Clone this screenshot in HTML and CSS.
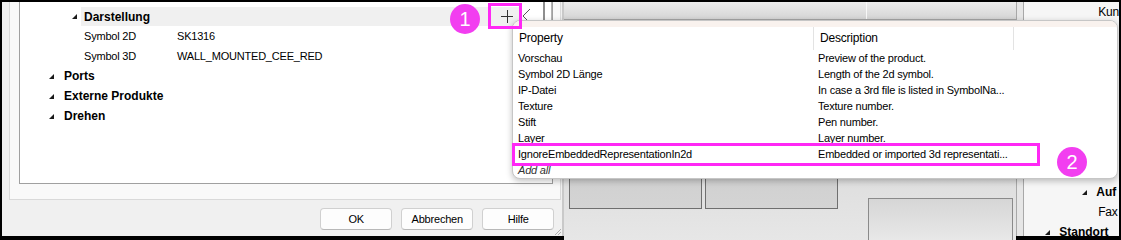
FILE: index.html
```html
<!DOCTYPE html>
<html lang="de">
<head>
<meta charset="UTF-8">
<title>Eigenschaften</title>
<link rel="stylesheet" href="styles.css">
</head>
<body>
<div class="screen">

  <!-- Dialog links -->
  <div class="dialog">
    <div class="tabpage">
      <div class="grid">
        <div class="row cat-row level1">
          <span class="tri"></span>
          <span class="band"><b>Darstellung</b></span>
        </div>
        <div class="row prop"><span class="name">Symbol 2D</span><span>SK1316</span></div>
        <div class="row prop"><span class="name">Symbol 3D</span><span>WALL_MOUNTED_CEE_RED</span></div>
        <div class="row cat-row level0"><span class="tri"></span><b>Ports</b></div>
        <div class="row cat-row level0"><span class="tri"></span><b>Externe Produkte</b></div>
        <div class="row cat-row level0"><span class="tri"></span><b>Drehen</b></div>

        <div class="grid-tools">
          <svg width="44" height="16" viewBox="0 0 44 16">
            <path d="M9 8.5h12M15.5 2v13" stroke="#333" stroke-width="1" fill="none"/>
            <path d="M38 1l-7 7 7 7" stroke="#555" stroke-width="1" fill="none"/>
          </svg>
        </div>
        <span class="edge-line edge-a"></span>
        <span class="edge-line edge-b"></span>
      </div>
    </div>
    <div class="buttons">
      <button>OK</button>
      <button>Abbrechen</button>
      <button>Hilfe</button>
    </div>
    <svg class="grip" width="8" height="8" viewBox="0 0 8 8">
      <path d="M7 1L1 7M7 4L4 7" stroke="#b0b0b0" stroke-width="1"/>
    </svg>
  </div>

  <!-- Anwendung im Hintergrund -->
  <div class="app">
    <div class="app-main">
      <div class="toolbar"><span class="tb-sep"></span></div>
      <div class="canvas">
        <div class="frame"></div>
        <div class="frame"></div>
        <div class="frame frame-low"></div>
      </div>
    </div>
    <div class="splitter"></div>
    <div class="side">
      <div class="side-row lvl-kun">Kun</div>
      <div class="side-gap"></div>
      <div class="side-row lvl-auf"><span class="tri"></span><b>Auf</b></div>
      <div class="side-row lvl-kun">Fax</div>
      <div class="side-row lvl-top"><span class="tri"></span><b>Standort</b></div>
    </div>
  </div>

  <!-- Popup Liste -->
  <div class="popup">
    <div class="pop-top"></div>
    <div class="pop-head">
      <span>Property</span>
      <span>Description</span>
      <span></span>
    </div>
    <div class="pop-row"><span>Vorschau</span><span>Preview of the product.</span></div>
    <div class="pop-row"><span>Symbol 2D Länge</span><span>Length of the 2d symbol.</span></div>
    <div class="pop-row"><span>IP-Datei</span><span>In case a 3rd file is listed in SymbolNa...</span></div>
    <div class="pop-row"><span>Texture</span><span>Texture number.</span></div>
    <div class="pop-row"><span>Stift</span><span>Pen number.</span></div>
    <div class="pop-row"><span>Layer</span><span>Layer number.</span></div>
    <div class="pop-row"><span>IgnoreEmbeddedRepresentationIn2d</span><span>Embedded or imported 3d representati...</span></div>
    <div class="pop-row add-all"><span>Add all</span><span></span></div>
  </div>

  <!-- Markierungen -->
  <div class="mark mark-plus"></div>
  <div class="mark mark-row"></div>
  <div class="badge badge-1">1</div>
  <div class="badge badge-2">2</div>
</div>
</body>
</html>
```

FILE: styles.css
```css
:root {
  --magenta: #ff28f5;
  --badge: #f23ef0;
  --dialog-bg: #f0f0f0;
  --text: #000;
}

body {
  margin: 0;
  font-family: "Liberation Sans", Arial, sans-serif;
  font-size: 11px;
  letter-spacing: -0.2px;
  color: var(--text);
}

b {
  font-size: 12px;
  letter-spacing: 0;
}

.screen {
  position: relative;
  width: 1121px;
  height: 240px;
  box-sizing: border-box;
  padding: 2px 2px 4px 2px;
  background: #000;
  display: flex;
  overflow: hidden;
}

/* ---------- Dialog ---------- */

.dialog {
  position: relative;
  width: 568px;
  box-sizing: border-box;
  background: var(--dialog-bg);
  border-right: 2px solid #c9c9c9;
  display: flex;
  flex-direction: column;
}

.tabpage {
  margin-left: 7px;
  width: 552px;
  height: 198px;
  box-sizing: border-box;
  background: #f9f9f9;
  border: 1px solid #d9d9d9;
  border-top: none;
  padding: 0 7px 15px 9px;
  display: flex;
}

.grid {
  position: relative;
  flex: 1;
  background: #fff;
  border: 1px solid #a0a0a0;
  border-top: none;
  padding-top: 4px;
}

.row {
  display: flex;
  align-items: center;
  height: 20px;
  white-space: nowrap;
}

.tri {
  display: inline-block;
  width: 0;
  height: 0;
  border-style: solid;
  border-width: 0 0 5px 5px;
  border-color: transparent transparent #1a1a1a transparent;
}

.level0 {
  padding-left: 29px;
}

.level0 .tri {
  margin-right: 10px;
}

.level1 {
  padding-left: 52px;
}

.level1 .band {
  margin-left: 4px;
  margin-right: 32px;
  flex: 1;
  height: 19px;
  align-self: flex-end;
  display: flex;
  align-items: center;
  padding-left: 3px;
  background: #f0f0f0;
}

.prop {
  padding-left: 64px;
}

.prop .name {
  width: 93px;
}

.grid-tools {
  position: absolute;
  left: 472px;
  top: 6px;
}

.edge-line {
  position: absolute;
  top: 0;
  height: 18px;
}

.edge-a {
  left: 523px;
  width: 2px;
  background: #8e8e8e;
}

.edge-b {
  left: 531px;
  width: 1px;
  background: #b4b4b4;
}

.buttons {
  display: flex;
  justify-content: flex-end;
  gap: 9px;
  padding: 8px 8px 0 0;
}

.buttons button {
  width: 72px;
  height: 22px;
  font-family: inherit;
  font-size: 11px;
  letter-spacing: -0.2px;
  background: #fdfdfd;
  border: 1px solid #d0d0d0;
  border-bottom-color: #b8b8b8;
  border-radius: 4px;
  color: #000;
}

.grip {
  position: absolute;
  right: 0;
  bottom: 0;
}

/* ---------- Anwendung ---------- */

.app {
  flex: 1;
  display: flex;
}

.app-main {
  width: 452px;
  display: flex;
  flex-direction: column;
}

.toolbar {
  height: 17px;
  border-bottom: 1px solid #a5a5a5;
  background: linear-gradient(#ececec, #d5d5d5);
  padding-left: 302px;
}

.tb-sep {
  display: block;
  width: 1px;
  height: 17px;
  background: #f8f8f8;
}

.canvas {
  flex: 1;
  display: flex;
  align-items: flex-start;
  gap: 3px;
  padding-left: 5px;
  background: linear-gradient(#c9c9c9, #e9e9e9);
}

.frame {
  width: 133px;
  height: 189px;
  box-sizing: border-box;
  border: 1px solid #6f6f6f;
  background: linear-gradient(#bdbdbd, #d4d4d4);
}

.frame-low {
  width: 145px;
  height: 60px;
  margin-left: 27px;
  margin-top: 178px;
  border-color: #8a8a8a;
  border-bottom: none;
  background: linear-gradient(#d6d6d6, #f0f0f0);
}

.splitter {
  width: 6px;
  border-left: 1px solid #a8a8a8;
  border-right: 1px solid #a8a8a8;
  background: #e6e6e6;
}

.side {
  flex: 1;
  background: #f6f6f6;
  font-size: 12px;
}

.side-row {
  display: flex;
  align-items: center;
  height: 20px;
  white-space: nowrap;
}

.side-row .tri {
  margin-right: 9px;
}

.lvl-kun {
  padding-left: 74px;
}

.lvl-auf {
  padding-left: 58px;
}

.lvl-top {
  padding-left: 21px;
}

.side-gap {
  height: 160px;
}

/* ---------- Popup ---------- */

.popup {
  position: absolute;
  left: 512px;
  top: 20px;
  width: 606px;
  height: 159px;
  box-sizing: border-box;
  background: #fff;
  border: 1px solid #c6c6c6;
  border-radius: 8px;
  box-shadow: 0 2px 6px rgba(0, 0, 0, 0.25);
  overflow: hidden;
}

.pop-top {
  height: 6px;
  background: #f9f2ee;
}

.pop-head,
.pop-row {
  display: grid;
  grid-template-columns: 300px 200px 1fr;
  white-space: nowrap;
}

.pop-head {
  height: 23px;
  align-items: center;
  font-size: 12px;
}

.pop-head span {
  height: 23px;
  line-height: 23px;
  padding-left: 6px;
}

.pop-head span + span {
  border-left: 1px solid #e3e3e3;
}

.pop-row {
  height: 16px;
  line-height: 16px;
}

.pop-row span {
  padding-left: 5px;
  overflow: hidden;
}

.add-all {
  font-style: italic;
  color: #333;
}

/* ---------- Markierungen ---------- */

.mark {
  position: absolute;
  box-sizing: border-box;
  border: 3px solid var(--magenta);
}

.mark-plus {
  left: 488px;
  top: 3px;
  width: 34px;
  height: 26px;
}

.mark-row {
  left: 512px;
  top: 143px;
  width: 528px;
  height: 23px;
}

.badge {
  position: absolute;
  width: 30px;
  height: 30px;
  border-radius: 50%;
  background: var(--badge);
  color: #fff;
  font-size: 20px;
  line-height: 30px;
  text-align: center;
  letter-spacing: 0;
}

.badge-1 {
  left: 450px;
  top: 4px;
}

.badge-2 {
  left: 1057px;
  top: 147px;
}
```
